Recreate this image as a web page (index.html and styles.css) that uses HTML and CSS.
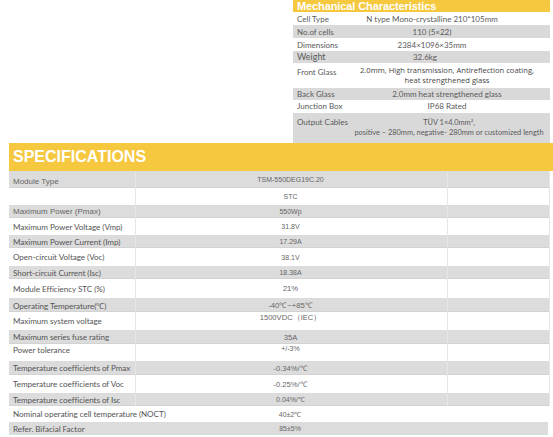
FILE: index.html
```html
<!DOCTYPE html>
<html>
<head>
<meta charset="utf-8">
<link rel="stylesheet" href="styles.css">
</head>
<body>
<div class="page">
  <section class="mech">
    <div class="mech-head">Mechanical Characteristics</div>
    <div class="mrow h13 shift"><span class="ml">Cell Type</span><span class="mv">N type Mono-crystalline 210*105mm</span></div>
    <div class="mrow h13 gray shift"><span class="ml">No.of cells</span><span class="mv">110 (5×22)</span></div>
    <div class="mrow h13 shift"><span class="ml">Dimensions</span><span class="mv">2384×1096×35mm</span></div>
    <div class="mrow h12 gray shift2"><span class="ml big">Weight</span><span class="mv">32.6kg</span></div>
    <div class="mrow h25 multi"><span class="ml">Front Glass</span><span class="mv strong">2.0mm, High transmission, Antireflection coating,<br>heat strengthened glass</span></div>
    <div class="mrow h12 gray"><span class="ml">Back Glass</span><span class="mv">2.0mm heat strengthened glass</span></div>
    <div class="mrow h12"><span class="ml">Junction Box</span><span class="mv">IP68 Rated</span></div>
    <div class="mrow h30 gray multi gapped"><span class="ml">Output Cables</span><span class="mv small">TÜV 1×4.0mm²,<br>positive – 280mm, negative- 280mm or customized length</span></div>
  </section>

  <section class="spec">
    <div class="spec-head">SPECIFICATIONS</div>
    <div class="grid">
      <div class="row gray h17 first"><div class="c1 arial low">Module Type</div><div class="c2">TSM-550DEG19C.20</div><div class="c3"></div></div>
      <div class="row h17"><div class="c1"></div><div class="c2">STC</div><div class="c3"></div></div>
      <div class="row gray h13"><div class="c1 arial">Maximum Power (Pmax)</div><div class="c2">550Wp</div><div class="c3"></div></div>
      <div class="row h17"><div class="c1">Maximum Power Voltage (Vmp)</div><div class="c2">31.8V</div><div class="c3"></div></div>
      <div class="row gray h13"><div class="c1">Maximum Power Current (Imp)</div><div class="c2">17.29A</div><div class="c3"></div></div>
      <div class="row h18"><div class="c1">Open-circuit Voltage (Voc)</div><div class="c2">38.1V</div><div class="c3"></div></div>
      <div class="row gray h13"><div class="c1">Short-circuit Current (Isc)</div><div class="c2">18.38A</div><div class="c3"></div></div>
      <div class="row h19"><div class="c1">Module Efficiency STC (%)</div><div class="c2 med">21%</div><div class="c3"></div></div>
      <div class="row gray h14"><div class="c1">Operating Temperature(℃)</div><div class="c2 med">-40℃~+85℃</div><div class="c3"></div></div>
      <div class="row h18"><div class="c1">Maximum system voltage</div><div class="c2 med top">1500VDC（IEC）</div><div class="c3"></div></div>
      <div class="row gray h14"><div class="c1">Maximum series fuse rating</div><div class="c2 med">35A</div><div class="c3"></div></div>
      <div class="row h17"><div class="c1 top">Power tolerance</div><div class="c2 top">+/-3%</div><div class="c3"></div></div>
      <div class="row gray h14"><div class="c1">Temperature coefficients of Pmax</div><div class="c2 med">-0.34%/℃</div><div class="c3"></div></div>
      <div class="row h18"><div class="c1">Temperature coefficients of Voc</div><div class="c2 med">-0.25%/℃</div><div class="c3"></div></div>
      <div class="row gray h13"><div class="c1">Temperature coefficients of Isc</div><div class="c2">0.04%/℃</div><div class="c3"></div></div>
    </div>
    <div class="extra">
      <div class="xrow h16"><div class="c1">Nominal operating cell temperature (NOCT)</div><div class="c2">40±2℃</div></div>
      <div class="xrow gray h13"><div class="c1">Refer. Bifacial Factor</div><div class="c2">85±5%</div></div>
    </div>
  </section>
</div>
</body>
</html>
```

FILE: styles.css
```css
* { box-sizing: border-box; }
html, body { margin: 0; padding: 0; background: #fff; }
body { width: 553px; height: 437px; overflow: hidden; font-family: "Liberation Sans", Arial, sans-serif; color: #595959; }

.page { display: flex; flex-direction: column; }

/* Mechanical */
.mech { margin-left: 293px; width: 257px; display: flex; flex-direction: column; }
.mech-head {
  height: 12px; background: #f5c83f; color: #fff;
  font-weight: bold; font-size: 11px; line-height: 12px;
  padding-left: 4px; letter-spacing: -0.1px;
}
.mrow {
  display: grid; grid-template-columns: 47px 1fr; align-items: center;
  font-family: Lato, "Liberation Sans", sans-serif; font-size: 8px; line-height: 10px;
  color: #5a5a5a; padding-left: 4px;
}
.mrow.gray { background: #d9d9d9; }
.mrow .ml { white-space: nowrap; }
.mrow .mv { text-align: center; white-space: nowrap; }
.mrow.shift .mv { padding-right: 30px; }
.mrow.shift2 .mv { padding-right: 44px; }
.mrow .ml.big { font-size: 9px; }
.mrow.multi { align-items: start; }
.mrow.multi .ml { padding-top: 4px; }
.mrow.multi .mv { padding-top: 2px; }
.mrow .mv.strong { font-family: "Open Sans", sans-serif; font-size: 7.6px; color: #444; }
.mrow .mv.small { font-size: 7.4px; padding-left: 4px; padding-top: 5px; }
.mrow.gapped { margin-top: 1px; }
.h12 { height: 12px; }
.h13 { height: 13px; }
.h14 { height: 14px; }
.h16 { height: 16px; }
.h17 { height: 17px; }
.h18 { height: 18px; }
.h19 { height: 19px; }
.h25 { height: 25px; }
.h30 { height: 30px; }

/* Specifications */
.spec { margin-left: 9px; display: flex; flex-direction: column; }
.spec-head {
  height: 28px; width: 544px; background: #f5c83f; color: #fff;
  font-weight: bold; font-size: 16px; line-height: 28px; padding-left: 4px;
}
.grid { width: 541px; display: flex; flex-direction: column; border-right: 1px solid #e6e6e6; }
.row { display: grid; grid-template-columns: 126px 312px 1fr; }
.row.gray, .xrow.gray { background: #dcdcdc; }
.row.gray { box-shadow: inset 0 -1px 0 #d2d2d2; }
.c1, .c2, .c3 { display: flex; align-items: center; }
.c1 {
  padding-left: 4px; font-family: Lato, "Liberation Sans", sans-serif;
  font-size: 8.1px; letter-spacing: -0.05px; color: #555; white-space: nowrap;
}
.c1.arial { font-family: "Liberation Sans", Arial, sans-serif; font-size: 8px; color: #666; letter-spacing: 0; }
.c1.low { align-items: flex-end; padding-bottom: 2px; }
.c2 {
  justify-content: center; font-size: 7px; color: #666; padding-right: 2px;
  border-left: 1px solid #e6e6e6; white-space: nowrap;
}
.c2.med { font-size: 7.6px; }
.c3 { border-left: 1px solid #e6e6e6; }
.top { align-items: flex-start; padding-top: 1px; }

.extra { display: flex; flex-direction: column; }
.xrow { display: grid; grid-template-columns: 126px 312px; width: 539px; }
.xrow .c2 { border-left: none; }
```
